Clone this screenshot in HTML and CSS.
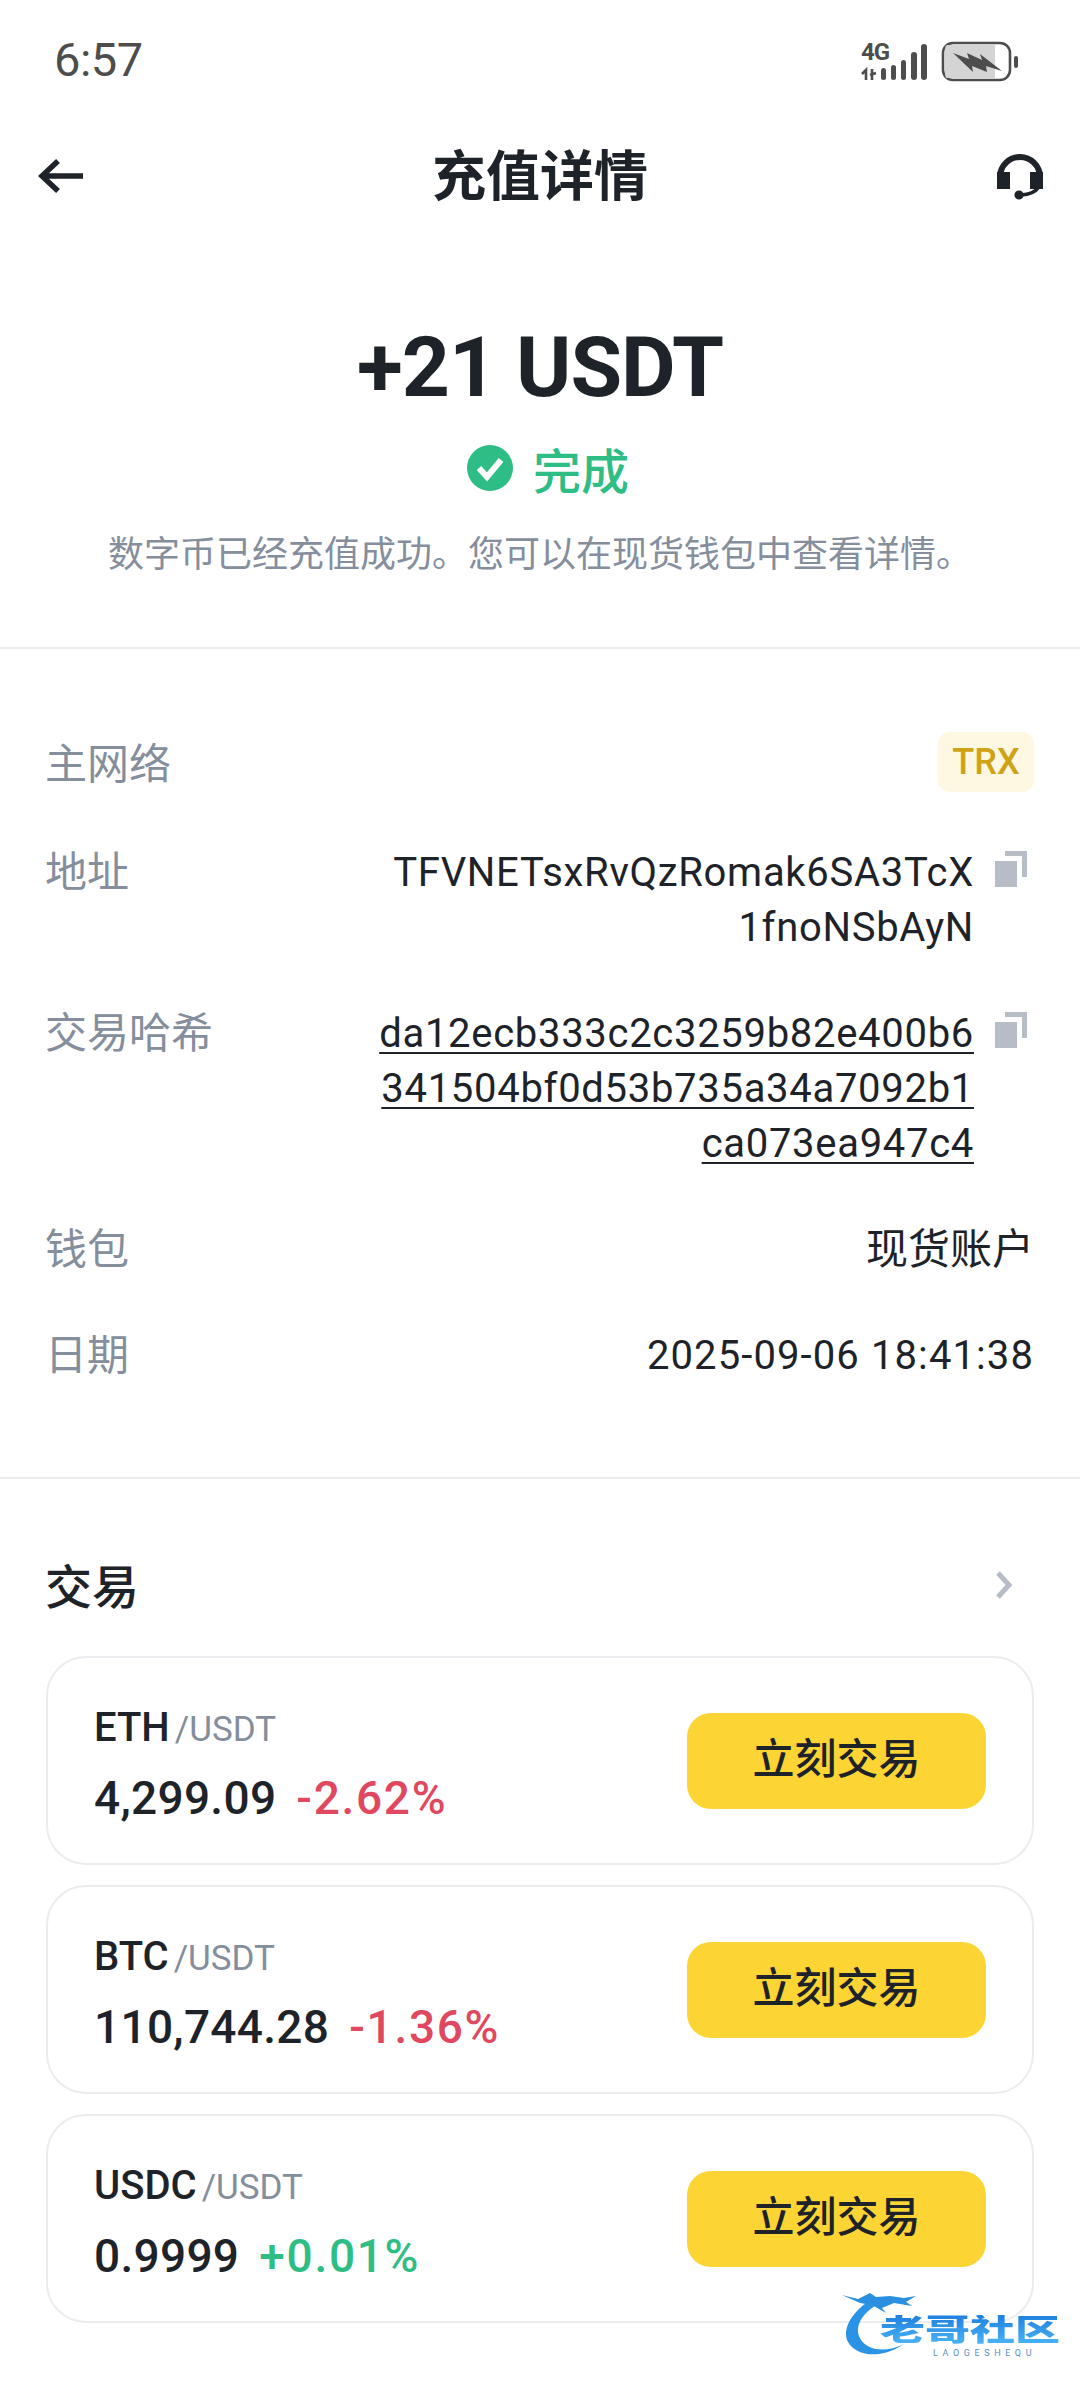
FILE: index.html
```html
<!DOCTYPE html>
<html lang="zh-CN">
<head>
<meta charset="utf-8">
<title>充值详情</title>
<link rel="stylesheet" href="styles.css">
</head>
<body>
<div class="screen">
  <div class="status-bar">
    <span class="time">6:57</span>
    <svg class="status-icons" width="160" height="50" viewBox="0 -6 160 50">
      <text x="0" y="18" class="net-label">4G</text>
      <path d="M1 32 L5 28 V38" fill="none" stroke="#4d4d4d" stroke-width="2.6"/>
      <path d="M11 27 V38 M9 33 L15 31" fill="none" stroke="#4d4d4d" stroke-width="2.6"/>
      <rect x="20" y="26" width="5" height="12" rx="2.5" fill="#4d4d4d"/>
      <rect x="30" y="23" width="5" height="15" rx="2.5" fill="#4d4d4d"/>
      <rect x="40" y="18" width="5" height="20" rx="2.5" fill="#4d4d4d"/>
      <rect x="50" y="10" width="6" height="28" rx="3" fill="#4d4d4d"/>
      <rect x="60" y="2" width="6" height="36" rx="3" fill="#4d4d4d"/>
      <rect x="82" y="1" width="67" height="37" rx="10" fill="#fff" stroke="#4d4d4d" stroke-width="2.6"/>
      <path d="M86 3 H134 V36 H86 Q84 36 84 30 V9 Q84 3 86 3 Z" fill="#d4d4d4"/>
      <path d="M92 11 L108 17 L106 11 L121 18 L119 12 L141 29 L125 24 L126 30 L111 24 L112 30 Z" fill="#4d4d4d"/>
      <rect x="153" y="14" width="4" height="12" rx="2" fill="#4d4d4d"/>
    </svg>
  </div>

  <header class="nav">
    <svg class="nav-back" width="46" height="36" viewBox="0 0 46 36">
      <path d="M20 3 L4 18 L20 33 M5 18 H45" fill="none" stroke="#1e2329" stroke-width="5.5"/>
    </svg>
    <h1 class="nav-title">充值详情</h1>
    <svg class="nav-help" width="46" height="47" viewBox="0 0 46 47">
      <path d="M3 24 A20 20 0 0 1 43 24" fill="none" stroke="#1e2329" stroke-width="6"/>
      <rect x="0" y="19" width="13" height="17" fill="#1e2329"/>
      <rect x="33" y="19" width="13" height="17" fill="#1e2329"/>
      <path d="M41 35 Q37 41 24 42" fill="none" stroke="#1e2329" stroke-width="3.5"/>
      <circle cx="22" cy="42" r="4.6" fill="#1e2329"/>
    </svg>
  </header>

  <section class="summary">
    <div class="amount">+21 USDT</div>
    <div class="state">
      <svg width="46" height="46" viewBox="0 0 46 46">
        <circle cx="23" cy="23" r="23" fill="#2ebd85"/>
        <path d="M12 23 L20 32 L34 15" fill="none" stroke="#fff" stroke-width="6"/>
      </svg>
      <span class="state-text">完成</span>
    </div>
    <p class="summary-note">数字币已经充值成功。您可以在现货钱包中查看详情。</p>
  </section>

  <section class="details">
    <div class="row row-center">
      <span class="label label-low">主网络</span>
      <span class="badge">TRX</span>
    </div>
    <div class="row">
      <span class="label">地址</span>
      <div class="value-wrap">
        <div class="value">
          <span class="line">TFVNETsxRvQzRomak6SA3TcX</span>
          <span class="line">1fnoNSbAyN</span>
        </div>
        <svg class="copy" width="32" height="36" viewBox="0 0 32 36"><path d="M0 10 H22 V36 H0 Z M10 0 H32 V26 H27 V5 H10 Z" fill="#b7bdc6"/></svg>
      </div>
    </div>
    <div class="row">
      <span class="label">交易哈希</span>
      <div class="value-wrap">
        <div class="value value-link">
          <span class="line"><u>da12ecb333c2c3259b82e400b6</u></span>
          <span class="line"><u>341504bf0d53b735a34a7092b1</u></span>
          <span class="line"><u>ca073ea947c4</u></span>
        </div>
        <svg class="copy" width="32" height="36" viewBox="0 0 32 36"><path d="M0 10 H22 V36 H0 Z M10 0 H32 V26 H27 V5 H10 Z" fill="#b7bdc6"/></svg>
      </div>
    </div>
    <div class="row">
      <span class="label">钱包</span>
      <span class="value value-cjk">现货账户</span>
    </div>
    <div class="row">
      <span class="label">日期</span>
      <span class="value value-date">2025-09-06 18:41:38</span>
    </div>
  </section>

  <section class="trade">
    <div class="trade-head">
      <h2 class="trade-title">交易</h2>
      <svg class="trade-more" width="20" height="28" viewBox="0 0 20 28"><path d="M4 2 L15 14 L4 26" fill="none" stroke="#b7bdc6" stroke-width="5"/></svg>
    </div>
    <div class="cards">
      <article class="card">
        <div class="pair">
          <div class="pair-name">ETH<span class="pair-quote">/USDT</span></div>
          <div class="pair-price">4,299.09<span class="change down">-2.62%</span></div>
        </div>
        <button class="trade-btn">立刻交易</button>
      </article>
      <article class="card">
        <div class="pair">
          <div class="pair-name">BTC<span class="pair-quote">/USDT</span></div>
          <div class="pair-price">110,744.28<span class="change down">-1.36%</span></div>
        </div>
        <button class="trade-btn">立刻交易</button>
      </article>
      <article class="card">
        <div class="pair">
          <div class="pair-name">USDC<span class="pair-quote">/USDT</span></div>
          <div class="pair-price">0.9999<span class="change up">+0.01%</span></div>
        </div>
        <button class="trade-btn">立刻交易</button>
      </article>
    </div>
  </section>

  <div class="watermark">
    <svg class="wm-dragon" width="76" height="70" viewBox="0 0 76 70">
      <path d="M28 8 C8 22 0 38 6 50 C14 64 38 68 62 52 C42 62 22 58 17 44 C13 32 22 20 36 12 Z" fill="#2b93e6"/>
      <path d="M0 3 L16 7 L28 1 L34 5 L48 4 L62 6 L74 4 L64 10 L70 14 L52 11 L40 16 L44 21 L30 13 L18 11 Z" fill="#2b8fe0"/>
    </svg>
    <div class="wm-text">老哥社区</div>
    <div class="wm-sub">LAOGESHEQU</div>
  </div>
</div>
</body>
</html>
```
FILE: styles.css
```css
* { box-sizing: border-box; margin: 0; padding: 0; }
html, body { background: #fff; }
body {
  font-family: Roboto, "Noto Sans CJK SC", sans-serif;
  color: #1e2329;
}
.screen {
  position: relative;
  width: 1080px;
  height: 2388px;
  overflow: hidden;
  background: #fff;
}
.status-bar {
  height: 118px;
  padding: 0 59px 0 54px;
  display: flex;
  align-items: center;
  justify-content: space-between;
}
.time { font-size: 47px; font-weight: 400; color: #4d4d4d; letter-spacing: -0.5px; }
.status-icons { display: block; margin-top: 4px; }
.net-label { font: 700 24px Roboto, sans-serif; fill: #4d4d4d; letter-spacing: -1px; }

.nav {
  position: relative;
  height: 116px;
  padding: 0 37px 0 38px;
  display: flex;
  align-items: center;
  justify-content: space-between;
}
.nav-title {
  position: absolute;
  left: 0;
  right: 0;
  top: 30px;
  text-align: center;
  font-size: 54px;
  line-height: 60px;
  font-weight: 700;
}
.summary {
  height: 415px;
  padding-top: 86px;
  border-bottom: 2px solid #eaecef;
  text-align: center;
}
.amount { font-size: 84px; line-height: 96px; font-weight: 700; letter-spacing: -1px; }
.state {
  margin-top: 22px;
  padding-left: 16px;
  height: 60px;
  display: flex;
  align-items: center;
  justify-content: center;
  gap: 20px;
}
.state-text { font-size: 48px; font-weight: 500; color: #2ebd85; }
.summary-note { margin-top: 32px; font-size: 36px; line-height: 50px; color: #848e9c; }

.details {
  padding: 83px 46px 94px;
  border-bottom: 2px solid #eaecef;
  display: flex;
  flex-direction: column;
  gap: 51px;
}
.row { display: flex; justify-content: space-between; align-items: flex-start; }
.row-center { align-items: center; margin-bottom: 2px; }
.label { font-size: 42px; line-height: 55px; color: #848e9c; margin-left: -1px; }
.label-low { margin-top: 4px; }
.badge {
  width: 96px;
  height: 60px;
  border-radius: 12px;
  background: #fef8e3;
  color: #d0a215;
  font-size: 36px;
  line-height: 60px;
  font-weight: 500;
  text-align: center;
}
.value-wrap { display: flex; align-items: flex-start; gap: 21px; padding-right: 7px; }
.value { font-size: 40px; line-height: 55px; text-align: right; letter-spacing: 0.7px; }
.value-cjk { font-size: 42px; letter-spacing: 0; }
.value-date { letter-spacing: 1.1px; }
.line { display: block; }
.value-link u { text-decoration-thickness: 2px; text-underline-offset: 5px; }
.copy { display: block; margin-top: 6px; }

.trade { padding: 79px 46px 0; }
.trade-head { height: 60px; display: flex; align-items: center; justify-content: space-between; padding-right: 20px; }
.trade-title { font-size: 47px; line-height: 60px; font-weight: 500; margin-left: -1px; }
.trade-more { margin-bottom: 6px; }
.cards { margin-top: 38px; display: flex; flex-direction: column; gap: 20px; }
.card {
  height: 209px;
  padding: 0 46px 0 46px;
  border: 2px solid #eaecef;
  border-radius: 40px;
  display: flex;
  align-items: center;
  justify-content: space-between;
}
.pair { padding-top: 4px; }
.pair-name { font-size: 40px; line-height: 69px; font-weight: 500; }
.pair-quote { margin-left: 5px; font-size: 35px; font-weight: 400; color: #848e9c; }
.pair-price { font-size: 46px; line-height: 68px; font-weight: 500; letter-spacing: 0.3px; }
.change { margin-left: 20px; letter-spacing: 1.7px; }
.down { color: #e0485f; }
.up { color: #2ebd85; }
.trade-btn {
  width: 299px;
  height: 96px;
  border: 0;
  border-radius: 24px;
  background: #fcd535;
  color: #1e2329;
  font-family: inherit;
  font-size: 42px;
  line-height: 92px;
  padding-bottom: 1px;
  font-weight: 500;
}

.watermark { position: absolute; left: 842px; top: 2292px; width: 230px; height: 72px; }
.wm-dragon { position: absolute; left: 0; top: 0; display: block; }
.wm-text {
  position: absolute;
  left: 38px;
  top: 15px;
  font-size: 45px;
  line-height: 45px;
  font-weight: 900;
  white-space: nowrap;
  transform: scaleY(0.66);
  background: linear-gradient(#1f7fe0, #4ab4f5);
  -webkit-background-clip: text;
  background-clip: text;
  color: transparent;
}
.wm-sub {
  position: absolute;
  left: 91px;
  top: 56px;
  font-size: 9px;
  line-height: 10px;
  letter-spacing: 4.6px;
  color: #5a8fc0;
  white-space: nowrap;
}
```
